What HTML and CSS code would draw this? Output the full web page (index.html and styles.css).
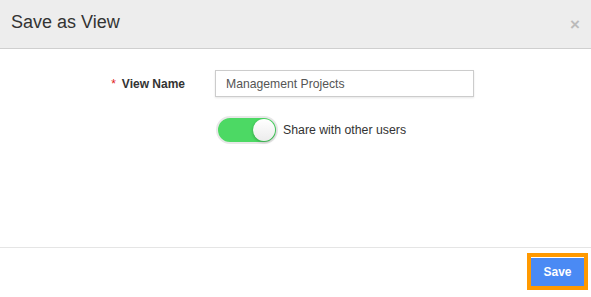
FILE: index.html
```html
<!DOCTYPE html>
<html lang="en">
<head>
    <meta charset="UTF-8">
    <title>Save as View</title>
    <link rel="stylesheet" href="styles.css">
</head>
<body>
    <div class="modal">
        <header class="modal-header">
            <h1>Save as View</h1>
            <span class="close">&times;</span>
        </header>
        <main class="modal-body">
            <div class="form-row">
                <label class="form-label"><span class="req">*</span>View Name</label>
                <input class="form-input" type="text" value="Management Projects">
            </div>
            <div class="form-row toggle-row">
                <span class="toggle"><span class="knob"></span></span>
                <span class="toggle-text">Share with other users</span>
            </div>
        </main>
        <footer class="modal-footer">
            <button class="btn-save">Save</button>
        </footer>
    </div>
</body>
</html>
```

FILE: styles.css
```css
* {
    margin: 0;
    padding: 0;
    box-sizing: border-box;
    font-family: "Liberation Sans", Arial, sans-serif;
}

body {
    background: #fff;
    width: 591px;
    height: 297px;
    overflow: hidden;
}

.modal {
    display: flex;
    flex-direction: column;
    height: 297px;
}

.modal-header {
    height: 49px;
    background: #ededed;
    border-bottom: 1px solid #cfcfcf;
    display: flex;
    justify-content: space-between;
    align-items: center;
    padding: 0 11px 0 11px;
}

.modal-header h1 {
    font-size: 18px;
    font-weight: 400;
    color: #333;
    margin-top: -3px;
}

.close {
    color: #bbb;
    font-size: 17px;
    font-weight: 700;
    margin-top: 2px;
}

.modal-body {
    height: 198px;
    padding-top: 21px;
}

.form-row {
    display: flex;
    align-items: center;
}

.form-label {
    width: 215px;
    text-align: right;
    padding-right: 30px;
    font-size: 12px;
    font-weight: 700;
    color: #333;
}

.req {
    color: #e02020;
    font-weight: 400;
    margin-right: 6px;
}

.form-input {
    width: 259px;
    height: 27px;
    border: 1px solid #ccc;
    box-shadow: 0 1px 2px rgba(0, 0, 0, 0.1);
    padding: 0 10px;
    font-size: 12.2px;
    color: #555;
    outline: none;
}

.toggle-row {
    padding-left: 216px;
    margin-top: 19px;
}

.toggle {
    width: 62px;
    height: 28px;
    border-radius: 14px;
    background: #4cd964;
    border: 2px solid #e8e8e8;
    display: flex;
    justify-content: flex-end;
    align-items: center;
    padding-right: 1px;
}

.knob {
    width: 22px;
    height: 22px;
    border-radius: 50%;
    background: linear-gradient(#fff, #ececec);
    box-shadow: 0 1px 3px rgba(0, 0, 0, 0.3);
}

.toggle-text {
    margin-left: 5px;
    font-size: 12.3px;
    color: #333;
}

.modal-footer {
    border-top: 1px solid #e5e5e5;
    flex: 1;
    display: flex;
    justify-content: flex-end;
    align-items: flex-start;
    padding: 5px 3px 0 0;
}

.btn-save {
    width: 61px;
    height: 37px;
    border: 4px solid #ff9900;
    background: #4a8af4;
    box-shadow: inset 0 1px 0 #fff;
    color: #fff;
    font-size: 12px;
    font-weight: 700;
}
```
